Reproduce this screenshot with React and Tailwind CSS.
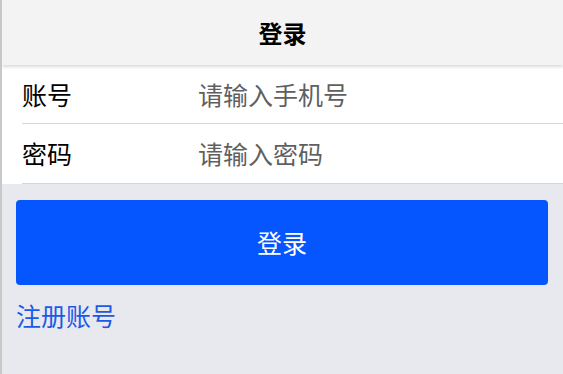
import React from "react";

export default function App() {
  const font = { fontFamily: '"Noto Sans CJK SC", "Noto Sans", sans-serif' };
  return (
    <div className="w-[563px] h-[374px] bg-[#e8e9ee] border-l-2 border-[#c8c8c8] overflow-hidden" style={font}>
      <div className="h-[65px] bg-[#f3f3f3] flex items-center justify-center shadow-[0_2px_3px_rgba(0,0,0,0.15)] relative z-10">
        <span className="text-[24px] leading-none font-bold text-black">登录</span>
      </div>
      <div className="bg-white">
        <div className="ml-[20px] h-[59px] flex items-center border-b border-[#d6d6d6]">
          <span className="w-[176px] text-[25px] leading-none text-black">账号</span>
          <span className="text-[25px] leading-none text-[#5f5f5f]">请输入手机号</span>
        </div>
        <div className="ml-[20px] h-[60px] flex items-center border-b border-[#d6d6d6]">
          <span className="w-[176px] text-[25px] leading-none text-black">密码</span>
          <span className="text-[25px] leading-none text-[#5f5f5f]">请输入密码</span>
        </div>
      </div>
      <div className="px-[14px] pt-[16px]">
        <div className="h-[85px] w-[532px] rounded-[4px] bg-[#0556ff] flex items-center justify-center">
          <span className="text-[25px] leading-none text-white">登录</span>
        </div>
        <div className="pt-[18px] text-[25px] leading-none text-[#1c5ae6]">注册账号</div>
      </div>
    </div>
  );
}
